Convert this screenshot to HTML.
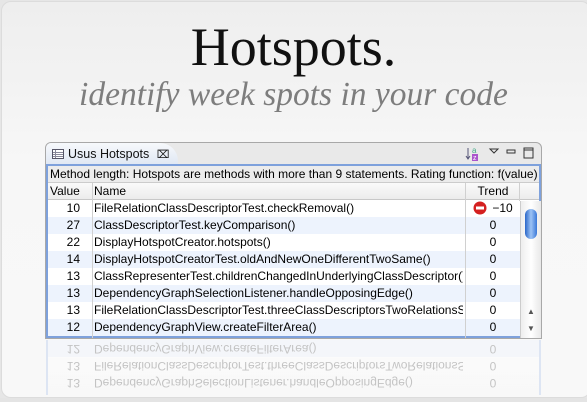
<!DOCTYPE html>
<html><head><meta charset="utf-8"><style>
*{margin:0;padding:0;box-sizing:border-box}
body{width:587px;height:402px;background:#e6e6e6;position:relative;overflow:hidden;font-family:"Liberation Sans",sans-serif}
.frame{position:absolute;left:1px;top:1px;width:590px;height:397px;border-radius:10px;background:linear-gradient(#eeeeee,#f7f7f7 40%,#f8f8f8);border:1px solid #dcdcdc}
.bot{position:absolute;left:0;top:398px;width:587px;height:4px;background:#e4e4e4}
h1{position:absolute;left:0;width:587px;top:16px;text-align:center;font-family:"Liberation Serif",serif;font-weight:normal;font-size:54px;color:#111}
h2{position:absolute;left:0;width:587px;top:76px;text-align:center;font-family:"Liberation Serif",serif;font-style:italic;font-weight:normal;font-size:33.5px;color:#7d7d7d}
.panel{position:absolute;left:45px;top:142px;width:497px;height:197px;border:1px solid #a8a8a8;border-radius:6px 6px 0 0;background:#e9e9e9}
.tab{position:absolute;left:0;top:0;width:132px;height:22px;background:linear-gradient(#f7f9fc,#dfe7f3);border-radius:5px 18px 0 0;font-size:12.5px;line-height:22px;padding-left:22px;color:#111}
.inner{position:absolute;left:0;top:21px;width:495px;height:174px;border:2px solid #7ea1dc;background:#fff}
.info{height:17px;background:#ececec;font-size:12px;line-height:17px;padding-left:2px;white-space:nowrap;overflow:hidden;border-bottom:1px solid #ccc}
.hdr{height:17px;background:linear-gradient(#fafafa,#ececec);font-size:12px;line-height:16px;border-bottom:1px solid #c8c8c8;position:relative}
.row{height:17px;font-size:12px;line-height:17px;position:relative;white-space:nowrap}
.row:nth-child(even){background:#edf3fd}
.v{position:absolute;left:0;width:32px;text-align:right}
.n{position:absolute;left:46px;width:369px;overflow:hidden}
.t{position:absolute;left:419px;width:52px;text-align:center}
.cols{position:absolute;top:17px;left:44px;width:1px;height:155px;background:#d0d0d0}
.sb{position:absolute;left:472px;top:35px;width:21px;height:137px;background:linear-gradient(90deg,#eee,#fff,#e8e8e8);border-left:1px solid #ccc}
.refl{position:absolute;left:46px;top:340px;width:495px;height:55px;background:linear-gradient(#fff,rgba(255,255,255,0));opacity:.55;overflow:hidden;border-left:2px solid #c7d6f0;border-right:2px solid #c7d6f0}
</style></head><body>
<div class="frame"></div><div class="bot"></div>
<h1>Hotspots.</h1>
<h2>identify week spots in your code</h2>
<div class="panel">
 <div class="tab"><svg style="position:absolute;left:6px;top:6px" width="12" height="10"><rect x=".5" y=".5" width="11" height="9" fill="#fff" stroke="#556"/><path d="M1 3.5H11M1 5.5H11M1 7.5H11M3.5 1V9" stroke="#889"/></svg>Usus Hotspots <span style="font-size:11px;margin-left:4px">⌧</span></div>
 <svg style="position:absolute;left:419px;top:3px" width="80" height="16"><path d="M3 2V13M1 10l2 3 2-3" stroke="#557" fill="none"/><text x="7" y="7" font-size="8" fill="#4a8" font-family="Liberation Sans">a</text><rect x="7" y="8" width="6" height="7" fill="#a5c"/><text x="8" y="14" font-size="7" fill="#fff" font-family="Liberation Sans">z</text><path d="M25 3h8l-4 4z" fill="none" stroke="#333"/><rect x="42" y="4" width="8" height="3" fill="none" stroke="#333"/><rect x="59" y="2" width="9" height="10" fill="none" stroke="#333"/><path d="M59 4h9" stroke="#333"/></svg>
 <div class="inner">
  <div class="info">Method length: Hotspots are methods with more than 9 statements. Rating function: f(value)</div>
  <div class="hdr"><span class="v" style="text-align:left;left:2px">Value</span><span class="n">Name</span><span class="t">Trend</span></div>
  <div>
   <div class="row"><span class="v">10</span><span class="n">FileRelationClassDescriptorTest.checkRemoval()</span><span class="t"><svg width="14" height="14" style="vertical-align:-3px;margin-right:5px"><circle cx="7" cy="7" r="6.5" fill="#d42020"/><rect x="3" y="5.5" width="8" height="3" fill="#fff"/></svg>−10</span></div>
   <div class="row"><span class="v">27</span><span class="n">ClassDescriptorTest.keyComparison()</span><span class="t">0</span></div>
   <div class="row"><span class="v">22</span><span class="n">DisplayHotspotCreator.hotspots()</span><span class="t">0</span></div>
   <div class="row"><span class="v">14</span><span class="n">DisplayHotspotCreatorTest.oldAndNewOneDifferentTwoSame()</span><span class="t">0</span></div>
   <div class="row"><span class="v">13</span><span class="n">ClassRepresenterTest.childrenChangedInUnderlyingClassDescriptor()</span><span class="t">0</span></div>
   <div class="row"><span class="v">13</span><span class="n">DependencyGraphSelectionListener.handleOpposingEdge()</span><span class="t">0</span></div>
   <div class="row"><span class="v">13</span><span class="n">FileRelationClassDescriptorTest.threeClassDescriptorsTwoRelationsSe</span><span class="t">0</span></div>
   <div class="row"><span class="v">12</span><span class="n">DependencyGraphView.createFilterArea()</span><span class="t">0</span></div>
  </div>
  <div class="cols"></div><div class="cols" style="left:417px"></div><div class="cols" style="left:471px;height:18px"></div>
  <div class="sb"><div style="position:absolute;left:4px;top:8px;width:12px;height:30px;border-radius:6px;background:linear-gradient(90deg,#2a66c8,#9cc3f5,#3a78d8)"></div><div style="position:absolute;left:6px;top:106px;font-size:8px;color:#555">▲</div><div style="position:absolute;left:6px;top:123px;font-size:8px;color:#555">▼</div></div>
 </div>
</div>
<div class="refl">
 <div style="position:relative;transform:scaleY(-1);color:#999;font-size:12px;height:51px;top:0">
  <div class="row" style="background:none"><span class="v">13</span><span class="n">DependencyGraphSelectionListener.handleOpposingEdge()</span><span class="t">0</span></div>
  <div class="row" style="background:none"><span class="v">13</span><span class="n">FileRelationClassDescriptorTest.threeClassDescriptorsTwoRelationsSe</span><span class="t">0</span></div>
  <div class="row" style="background:#f2f6fd"><span class="v">12</span><span class="n">DependencyGraphView.createFilterArea()</span><span class="t">0</span></div>
 </div>
</div>
</body></html>
